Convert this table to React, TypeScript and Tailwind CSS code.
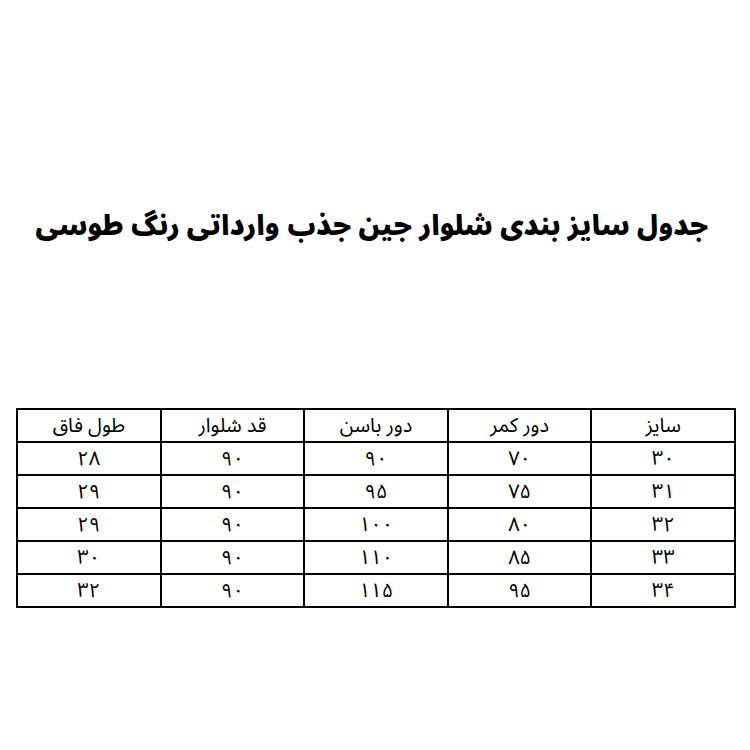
import React from "react";

const headers = ["سایز", "دور کمر", "دور باسن", "قد شلوار", "طول فاق"];
const rows = [
  ["۳۰", "۷۰", "۹۰", "۹۰", "۲۸"],
  ["۳۱", "۷۵", "۹۵", "۹۰", "۲۹"],
  ["۳۲", "۸۰", "۱۰۰", "۹۰", "۲۹"],
  ["۳۳", "۸۵", "۱۱۰", "۹۰", "۳۰"],
  ["۳۴", "۹۵", "۱۱۵", "۹۰", "۳۲"],
];

export default function App() {
  return (
    <div
      dir="rtl"
      className="w-[750px] h-[750px] bg-white flex flex-col items-center text-black"
      style={{ fontFamily: '"Noto Sans Arabic", "DejaVu Sans", sans-serif' }}
    >
      <h1 className="mt-[202px] mr-[6px] h-[48px] text-[27.5px] leading-[48px] font-black whitespace-nowrap">
        جدول سایز بندی شلوار جین جذب وارداتی رنگ طوسی
      </h1>
      <table className="mt-[158px] ml-[2px] border-collapse border-2 border-black w-[720px]">
        <thead>
          <tr className="h-[33px]">
            {headers.map((h) => (
              <th key={h} className="w-[144px] border-2 border-black text-[20px] font-normal leading-[26px] p-0">
                {h}
              </th>
            ))}
          </tr>
        </thead>
        <tbody>
          {rows.map((r, i) => (
            <tr key={i} className="h-[33px]">
              {r.map((c, j) => (
                <td key={j} className="border-2 border-black text-center text-[20px] leading-[26px] p-0">
                  {c}
                </td>
              ))}
            </tr>
          ))}
        </tbody>
      </table>
    </div>
  );
}
